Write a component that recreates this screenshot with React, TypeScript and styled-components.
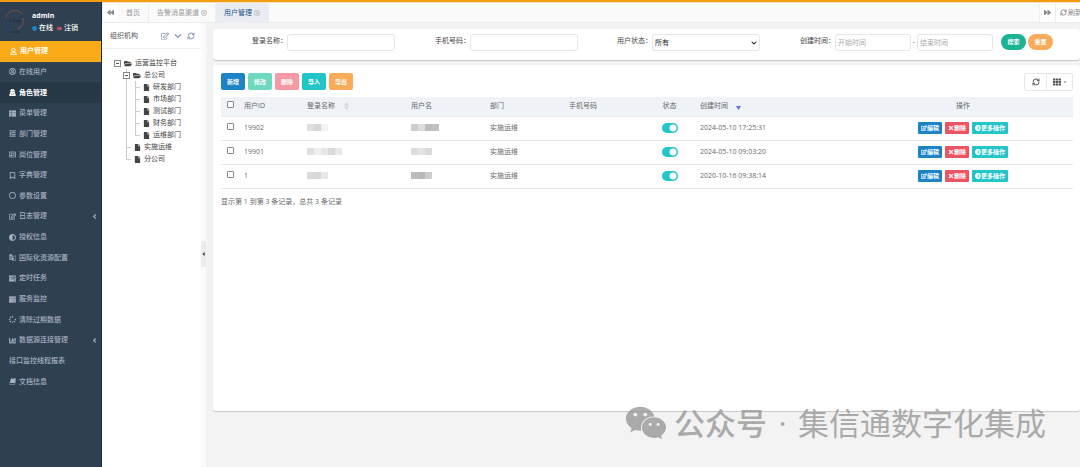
import React from "react";
import styled, { createGlobalStyle, css } from "styled-components";
import {
  FaRegUser, FaRegUserCircle, FaUserSecret, FaThList, FaOutdent, FaRegAddressCard, FaRegBookmark,
  FaRegCircle, FaRegEdit, FaAdjust, FaServer, FaSpinner, FaChartBar,
  FaAngleLeft, FaCircle, FaSignOutAlt, FaForward, FaBackward, FaRegTimesCircle, FaChevronDown,
  FaFolderOpen, FaFile, FaCaretLeft, FaTh, FaCaretDown, FaTimes, FaChevronCircleRight, FaWeixin,
} from "react-icons/fa";
import { MdGTranslate } from "react-icons/md";
import { RefreshCw } from "lucide-react";

const Global = createGlobalStyle`
  * { box-sizing: border-box; }
  html, body { margin: 0; }
  body, button, input, select {
    font-family: "Open Sans", "Noto Sans CJK SC", sans-serif;
    font-size: 7px;
    line-height: 10px;
    color: #676a6c;
  }
  button { cursor: pointer; }
  a { color: inherit; text-decoration: none; }
`;

const Page = styled.div`
  display: flex;
  flex-direction: column;
  min-height: 100vh;
  border-top: 2px solid #f39c12;
  background: #f3f3f4;
  overflow: hidden;
`;
const Shell = styled.div`
  display: flex;
  flex: 1;
`;

/* Sidebar */
const Sidebar = styled.aside`
  flex: 0 0 102px;
  background: #2f4050;
  border-right: 1px solid #1f2b37;
`;
const Profile = styled.div`
  display: flex;
  gap: 5px;
  height: 39px;
  padding: 7px 3px;
`;
const Avatar = styled.svg`
  width: 24px;
  height: 26px;
`;
const ProfileText = styled.div`
  display: flex;
  flex-direction: column;
  gap: 2px;
  padding-top: 2px;
  color: #fff;
`;
const UserName = styled.strong`
  font-size: 7px;
  line-height: 10px;
`;
const Status = styled.div`
  display: flex;
  gap: 4px;
  a { display: flex; align-items: center; gap: 2px; font-size: 7px; font-weight: 500; }
  svg { width: 5px; height: 5px; }
`;
const Nav = styled.nav`
  display: grid;
  grid-auto-rows: 1fr;
  height: 351px;
`;
const NavItem = styled.a<{ $state?: "active" | "hover" }>`
  display: flex;
  align-items: center;
  gap: 3px;
  padding: 0 3px 0 9px;
  font-weight: 500;
  color: #a7b1c2;
  white-space: nowrap;
  svg { width: 7px; height: 7px; flex: none; stroke: currentColor; stroke-width: 18px; }
  svg[viewBox="0 0 24 24"], svg[viewBox="0 0 14 14"] { stroke: none; }
  span { flex: 1; }
  ${(p) => p.$state === "active" && css`background: #fbab18; color: #fff; font-weight: 700; padding-left: 10px;`}
  ${(p) => p.$state === "hover" && css`background: #293846; color: #fff; font-weight: 700;`}
`;

/* Tabs */
const Content = styled.div`
  display: flex;
  flex-direction: column;
  flex: 1;
  min-width: 0;
`;
const TabBar = styled.div`
  display: flex;
  height: 21px;
  background: #fafafa;
  border-top: 1px solid #fbe3bd;
  border-bottom: 1px solid #ececec;
`;
const BarButton = styled.button<{ $wide?: boolean }>`
  display: flex;
  align-items: center;
  justify-content: ${(p) => (p.$wide ? "flex-start" : "center")};
  gap: 1px;
  width: ${(p) => (p.$wide ? 25 : 16)}px;
  padding: 0 0 0 ${(p) => (p.$wide ? 4 : 0)}px;
  border: 0;
  border-left: 1px solid #eee;
  background: #fff;
  color: #888;
  white-space: nowrap;
  overflow: hidden;
  svg { width: 7px; height: 7px; flex: none; }
`;
const Tab = styled.button<{ $on?: boolean }>`
  display: flex;
  align-items: center;
  gap: 2px;
  padding: 0 8px;
  border: 0;
  border-right: 1px solid #eee;
  background: ${(p) => (p.$on ? "#e9edf3" : "#fafafa")};
  color: ${(p) => (p.$on ? "#23508e" : "#999")};
  svg { width: 6px; height: 6px; color: #c4c4c4; stroke: currentColor; stroke-width: 30px; }
`;
const Spacer = styled.div`
  flex: 1;
`;
const Body = styled.div`
  display: flex;
  flex: 1;
`;

/* Organisation tree */
const OrgPanel = styled.section`
  flex: 0 0 99px;
  background: #fff;
`;
const OrgHead = styled.header`
  display: flex;
  align-items: center;
  gap: 5px;
  height: 26px;
  padding: 0 6px 0 8px;
  border-bottom: 1px solid #eee;
  color: #8796ae;
  h2 { flex: 1; margin: 0; font-size: 7px; font-weight: 400; color: #555; }
  button { display: flex; padding: 0; border: 0; background: none; color: inherit; }
  svg { width: 8px; height: 8px; }
`;
const Tree = styled.ul<{ $root?: boolean }>`
  margin: 0;
  padding: ${(p) => (p.$root ? "8px 0 0 12px" : "0 0 0 9px")};
  list-style: none;
`;
const TreeNode = styled.li<{ $top?: boolean }>`
  position: relative;
  ${(p) => !p.$top && css`
    &::before {
      content: "";
      position: absolute;
      left: 3px;
      top: 0;
      bottom: 0;
      border-left: 1px solid #ccc;
    }
    &:last-child::before { bottom: auto; height: 6px; }
  `}
`;
const TreeRow = styled.div<{ $leaf?: boolean }>`
  display: flex;
  align-items: center;
  gap: 3px;
  height: 12px;
  color: #444;
  white-space: nowrap;
  svg { width: ${(p) => (p.$leaf ? 7 : 8)}px; height: 7px; flex: none; }
  &::before {
    content: "";
    width: ${(p) => (p.$leaf ? 5 : 0)}px;
    margin-left: ${(p) => (p.$leaf ? 3 : -3)}px;
    border-top: 1px solid #ccc;
  }
`;
const Expander = styled.button`
  position: relative;
  width: 7px;
  height: 7px;
  padding: 0;
  border: 1px solid #888;
  background: #fff;
  &::after { content: ""; position: absolute; left: 1px; right: 1px; top: 2px; border-top: 1px solid #555; }
`;
const Splitter = styled.div`
  display: flex;
  flex-direction: column;
  flex: 0 0 5px;
  padding-top: 218px;
  background: #fafafa;
  button {
    display: flex;
    align-items: center;
    justify-content: center;
    height: 26px;
    padding: 0;
    border: 0;
    background: #ececec;
  }
  svg { width: 5px; height: 6px; color: #333; flex: none; }
`;

/* Main */
const Main = styled.main`
  display: flex;
  flex-direction: column;
  gap: 5px;
  flex: 1;
  min-width: 0;
  padding: 6px 0 56px 7px;
`;
const Card = styled.section<{ $grow?: boolean }>`
  background: #fff;
  border-radius: 3px;
  box-shadow: 0 1px 1px rgba(0, 0, 0, 0.18);
  ${(p) => p.$grow && css`flex: 1; padding: 8px 7px 0 8px;`}
`;
const SearchForm = styled.form`
  display: grid;
  grid-template-columns: 182fr 183fr 182fr 320fr;
  height: 31px;
  padding-top: 5px;
`;
const Field = styled.div<{ $range?: boolean }>`
  display: flex;
  align-items: flex-start;
  justify-content: ${(p) => (p.$range ? "flex-start" : "flex-end")};
  padding-left: ${(p) => (p.$range ? 40 : 0)}px;
  label { line-height: 14px; color: #444; white-space: nowrap; }
`;
const Input = styled.input<{ $short?: boolean }>`
  width: ${(p) => (p.$short ? 76 : 108)}px;
  height: 17px;
  padding: 0 2px;
  border: 1px solid #e5e6e7;
  border-radius: 3px;
  background: #fff;
  &::placeholder { color: #aaa; }
`;
const SelectBox = styled.div`
  position: relative;
  display: flex;
  svg { position: absolute; right: 3px; top: 6px; width: 6px; height: 6px; color: #222; pointer-events: none; }
`;
const Select = styled.select`
  appearance: none;
  width: 108px;
  height: 17px;
  padding: 0 2px;
  border: 1px solid #e5e6e7;
  border-radius: 3px;
  background: #fff;
  color: #222;
`;
const Dash = styled.span`
  width: 6px;
  line-height: 16px;
  text-align: center;
`;
const PillGroup = styled.div`
  display: flex;
  gap: 2px;
  margin-left: 8px;
`;
const Button = styled.button<{ $color: string; $pill?: boolean }>`
  width: ${(p) => (p.$pill ? 25 : 24)}px;
  height: ${(p) => (p.$pill ? 16 : 17)}px;
  padding: 0;
  border: 0;
  border-radius: ${(p) => (p.$pill ? 8 : 2)}px;
  background: ${(p) => p.$color};
  color: #fff;
  font-size: 6px;
  font-weight: 600;
  text-align: center;
`;
const Toolbar = styled.div`
  display: flex;
  gap: 3px;
  height: 24px;
`;
const ToolGroup = styled.div`
  display: flex;
  height: 18px;
  border: 1px solid #e7e7e7;
  border-radius: 2px;
  button {
    display: flex;
    align-items: center;
    justify-content: center;
    gap: 2px;
    width: 21px;
    padding: 0;
    border: 0;
    background: none;
    color: #555;
  }
  button + button { width: 26px; border-left: 1px solid #e7e7e7; }
  svg { width: 8px; height: 8px; }
  svg + svg { width: 4px; height: 4px; }
`;
const Table = styled.table`
  width: 100%;
  table-layout: fixed;
  border-collapse: collapse;
  th, td { padding: 0 4px 1px; text-align: left; font-weight: 400; white-space: nowrap; border-bottom: 1px solid #e7eaec; }
  th { height: 19px; background: #eff3f8; color: #666; }
  td { height: 24px; padding-bottom: 1px; }
`;
const Th = styled.th<{ $center?: boolean }>`
  && { text-align: ${(p) => (p.$center ? "center" : "left")}; }
`;
const Check = styled.input`
  appearance: none;
  display: block;
  width: 7px;
  height: 7px;
  margin: 0 0 2px 2px;
  border: 1px solid #888;
  border-radius: 1px;
  background: #fff;
`;
const Switch = styled.input`
  appearance: none;
  display: block;
  width: 16px;
  height: 10px;
  margin: 0 auto;
  border-radius: 5px;
  background: radial-gradient(circle at 11px 5px, #fff 3px, #23c6c8 4px);
`;
const Sort = styled.svg<{ $gap: number }>`
  width: 5px;
  height: 8px;
  margin-left: ${(p) => p.$gap}px;
  vertical-align: middle;
`;
const Mosaic = styled.div`
  display: flex;
  height: 7px;
`;
const Tile = styled.i<{ $c: string }>`
  width: 7px;
  background: ${(p) => p.$c};
`;
const Actions = styled.div`
  display: flex;
  justify-content: center;
  gap: 3px;
`;
const Action = styled.button<{ $color: string }>`
  display: flex;
  align-items: center;
  height: 12px;
  padding: 0 3px;
  border: 0;
  border-radius: 1px;
  background: ${(p) => p.$color};
  color: #fff;
  font-size: 6px;
  font-weight: 600;
  svg { width: 6px; height: 6px; stroke: currentColor; stroke-width: 20px; }
`;
const Summary = styled.p`
  margin: 8px 0 0;
`;
const Watermark = styled.div`
  position: absolute;
  right: 34px;
  top: 400px;
  display: flex;
  align-items: center;
  color: #999;
  opacity: 0.8;
  font-size: 31px;
  line-height: 46px;
  white-space: nowrap;
  pointer-events: none;
  svg { width: 42px; height: 42px; margin-right: 7px; }
`;
const Dot = styled.span`
  width: 31px;
  text-align: center;
`;
const Strong = styled.span`
  font-weight: 500;
`;

const TasksIcon = () => (
  <svg viewBox="0 0 14 14" fill="currentColor">
    <path fillRule="evenodd" d="M0 1h14v3.500H0zM8 2.200v1h5v-1zM0 5.300h14v3.500H0zM5 6.500v1h8v-1zM0 9.600h14v3.500H0zM10 10.800v1h3v-1z" />
  </svg>
);
const BookIcon = () => (
  <svg viewBox="0 0 14 14" fill="currentColor">
    <path d="M4 1H14L11.500 10H1.500Z" />
    <path d="M1 10.500L1.500 13H11.500L14 4" fill="none" style={{ stroke: "currentColor", strokeWidth: 1 }} />
  </svg>
);

const menu: { text: string; icon?: React.ReactNode; state?: "active" | "hover"; sub?: boolean }[] = [
  { text: "用户管理", icon: <FaRegUser />, state: "active" },
  { text: "在线用户", icon: <FaRegUserCircle /> },
  { text: "角色管理", icon: <FaUserSecret />, state: "hover" },
  { text: "菜单管理", icon: <FaThList /> },
  { text: "部门管理", icon: <FaOutdent /> },
  { text: "岗位管理", icon: <FaRegAddressCard /> },
  { text: "字典管理", icon: <FaRegBookmark /> },
  { text: "参数设置", icon: <FaRegCircle /> },
  { text: "日志管理", icon: <FaRegEdit />, sub: true },
  { text: "授权信息", icon: <FaAdjust /> },
  { text: "国际化资源配置", icon: <MdGTranslate /> },
  { text: "定时任务", icon: <TasksIcon /> },
  { text: "服务监控", icon: <FaServer /> },
  { text: "清除过期数据", icon: <FaSpinner /> },
  { text: "数据源连接管理", icon: <FaChartBar />, sub: true },
  { text: "接口监控线程报表" },
  { text: "文档信息", icon: <BookIcon /> },
];

const rows = [
  { id: "19902", login: ["#e0e0e0", "#d6d6d6", "#f3f3f3"], name: ["#ccc", "#ddd", "#bdbdbd", "#c1c1c1"], time: "2024-05-10 17:25:31" },
  { id: "19901", login: ["#e0e0e0", "#f0f0f0", "#e6e6e6", "#dadada", "#e8e8e8"], name: ["#dcdcdc", "#e4e4e4", "#dadada"], time: "2024-05-10 09:03:20" },
  { id: "1", login: ["#dadada", "#d5d8da", "#e8e8e8"], name: ["#bdbdbd", "#b8b8b8", "#cdcdcd"], time: "2020-10-16 09:38:14" },
];

const tools: [string, string][] = [
  ["新增", "#1c84c6"], ["修改", "#6fd9c0"], ["删除", "#f599a3"], ["导入", "#23c6c8"], ["导出", "#f8ac59"],
];

const columns = [19, 63, 104, 79, 79, 78, 53, 157, 220];

const Leaf = ({ text }: { text: string }) => (
  <TreeNode>
    <TreeRow $leaf><FaFile />{text}</TreeRow>
  </TreeNode>
);

export default function App() {
  return (
    <Page>
      <Global />
      <Shell>
        <Sidebar>
          <Profile>
            <Avatar viewBox="0 0 24 26" fill="none">
              <path d="M3 9A9 9 0 0 1 19 5M20 9a9 9 0 0 1-5 11" stroke="#8b4a3c" />
              <path d="M2 10a9 9 0 0 0 7 10M8 4c-5 5-4 12 2 16M14 3c6 5 5 12 0 17" stroke="#26426b" />
              <path d="M6 12h3M11 10v4M14 12h4M7 23h10" stroke="#1f2c42" />
            </Avatar>
            <ProfileText>
              <UserName>admin</UserName>
              <Status>
                <a href="#online"><FaCircle color="#1c84c6" />在线</a>
                <a href="#logout"><FaSignOutAlt color="#ed5565" />注销</a>
              </Status>
            </ProfileText>
          </Profile>
          <Nav>
            {menu.map((m) => (
              <NavItem key={m.text} href="#menu" $state={m.state}>
                {m.icon}
                <span>{m.text}</span>
                {m.sub && <FaAngleLeft />}
              </NavItem>
            ))}
          </Nav>
        </Sidebar>
        <Content>
          <TabBar>
            <BarButton aria-label="向左"><FaBackward /></BarButton>
            <Tab>首页</Tab>
            <Tab>告警消息渠道<FaRegTimesCircle /></Tab>
            <Tab $on>用户管理<FaRegTimesCircle /></Tab>
            <Spacer />
            <BarButton aria-label="向右"><FaForward /></BarButton>
            <BarButton $wide><RefreshCw strokeWidth={3} />刷新</BarButton>
          </TabBar>
          <Body>
            <OrgPanel>
              <OrgHead>
                <h2>组织机构</h2>
                <button aria-label="编辑"><FaRegEdit /></button>
                <button aria-label="展开"><FaChevronDown /></button>
                <button aria-label="刷新"><RefreshCw strokeWidth={3} /></button>
              </OrgHead>
              <Tree $root>
                <TreeNode $top>
                  <TreeRow><Expander aria-label="折叠" /><FaFolderOpen />运营监控平台</TreeRow>
                  <Tree>
                    <TreeNode>
                      <TreeRow><Expander aria-label="折叠" /><FaFolderOpen />总公司</TreeRow>
                      <Tree>
                        {["研发部门", "市场部门", "测试部门", "财务部门", "运维部门"].map((t) => <Leaf key={t} text={t} />)}
                      </Tree>
                    </TreeNode>
                    <Leaf text="实施运维" />
                    <Leaf text="分公司" />
                  </Tree>
                </TreeNode>
              </Tree>
            </OrgPanel>
            <Splitter><button aria-label="收起"><FaCaretLeft /></button></Splitter>
            <Main>
              <Card>
                <SearchForm>
                  <Field><label htmlFor="login">登录名称：</label><Input id="login" /></Field>
                  <Field><label htmlFor="phone">手机号码：</label><Input id="phone" /></Field>
                  <Field>
                    <label htmlFor="status">用户状态：</label>
                    <SelectBox><Select id="status"><option>所有</option></Select><FaChevronDown /></SelectBox>
                  </Field>
                  <Field $range>
                    <label htmlFor="from">创建时间：</label>
                    <Input id="from" $short placeholder="开始时间" />
                    <Dash>-</Dash>
                    <Input aria-label="结束时间" $short placeholder="结束时间" />
                    <PillGroup>
                      <Button type="button" $pill $color="#1ab394">搜索</Button>
                      <Button type="button" $pill $color="#f8ac59">重置</Button>
                    </PillGroup>
                  </Field>
                </SearchForm>
              </Card>
              <Card $grow>
                <Toolbar>
                  {tools.map(([t, c]) => <Button key={t} $color={c}>{t}</Button>)}
                  <Spacer />
                  <ToolGroup>
                    <button aria-label="刷新"><RefreshCw strokeWidth={3} /></button>
                    <button aria-label="列"><FaTh /><FaCaretDown /></button>
                  </ToolGroup>
                </Toolbar>
                <Table>
                  <colgroup>{columns.map((w, i) => <col key={i} style={{ width: w }} />)}</colgroup>
                  <thead>
                    <tr>
                      <Th><Check type="checkbox" aria-label="全选" /></Th>
                      <Th>用户ID</Th>
                      <Th>登录名称<Sort $gap={9} viewBox="0 0 5 8"><path d="M0 3.5 2.5 0 5 3.5ZM0 4.5 2.5 8 5 4.5Z" fill="#d3d6da" /></Sort></Th>
                      <Th>用户名</Th>
                      <Th>部门</Th>
                      <Th>手机号码</Th>
                      <Th $center>状态</Th>
                      <Th>创建时间<Sort $gap={8} viewBox="0 0 5 8"><path d="M0 4 2.5 8 5 4Z" fill="#6a6ae0" /></Sort></Th>
                      <Th $center>操作</Th>
                    </tr>
                  </thead>
                  <tbody>
                    {rows.map((r) => (
                      <tr key={r.id}>
                        <td><Check type="checkbox" aria-label={r.id} /></td>
                        <td>{r.id}</td>
                        <td><Mosaic>{r.login.map((c, i) => <Tile key={i} $c={c} />)}</Mosaic></td>
                        <td><Mosaic>{r.name.map((c, i) => <Tile key={i} $c={c} />)}</Mosaic></td>
                        <td>实施运维</td>
                        <td />
                        <td><Switch type="checkbox" role="switch" defaultChecked aria-label="状态" /></td>
                        <td>{r.time}</td>
                        <td>
                          <Actions>
                            <Action $color="#1c84c6"><FaRegEdit />编辑</Action>
                            <Action $color="#ed5565"><FaTimes />删除</Action>
                            <Action $color="#23c6c8"><FaChevronCircleRight />更多操作</Action>
                          </Actions>
                        </td>
                      </tr>
                    ))}
                  </tbody>
                </Table>
                <Summary>显示第 1 到第 3 条记录，总共 3 条记录</Summary>
              </Card>
            </Main>
          </Body>
        </Content>
      </Shell>
      <Watermark>
        <FaWeixin />
        <Strong>公众号</Strong>
        <Dot>·</Dot>
        <span>集信通数字化集成</span>
      </Watermark>
    </Page>
  );
}
